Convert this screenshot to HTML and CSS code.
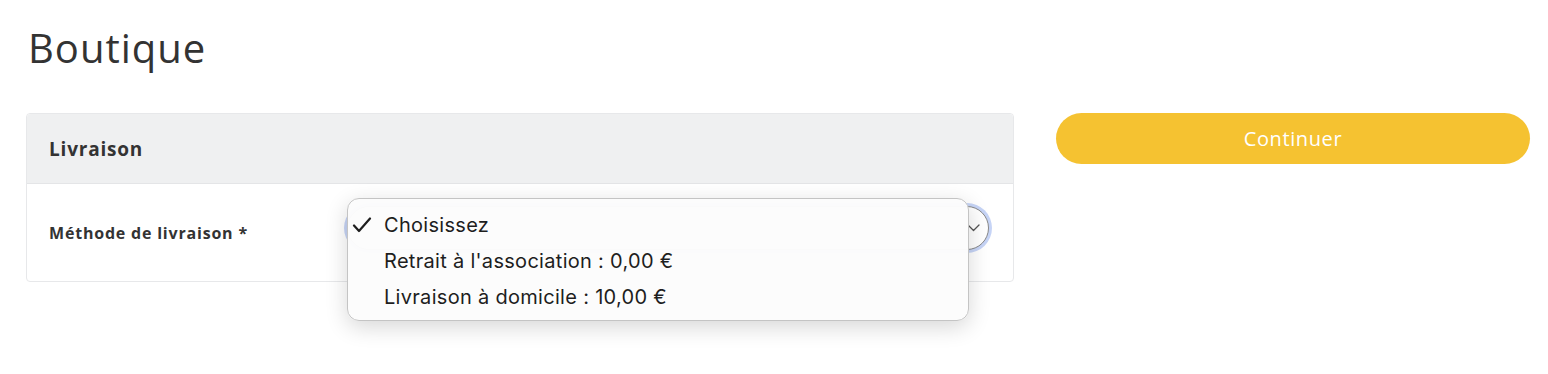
FILE: index.html
```html
<!DOCTYPE html>
<html lang="fr">
<head>
  <meta charset="UTF-8">
  <title>Boutique</title>
  <link rel="stylesheet" href="styles.css">
</head>
<body>
  <h1 class="page-title">Boutique</h1>

  <div class="checkout">
    <!-- Delivery card -->
    <div class="card">
      <div class="card-header">Livraison</div>
      <div class="card-body">
        <label class="field-label">Méthode de livraison *</label>
        <div class="select-wrap">
          <div class="select">
            <span class="select-arrow">
              <svg width="13" height="8" viewBox="0 0 13 8"><path d="M1 1 L6.5 6.5 L12 1" fill="none" stroke="#555" stroke-width="1.3" stroke-linecap="round" stroke-linejoin="round"/></svg>
            </span>
          </div>
          <!-- open native menu -->
          <ul class="menu">
            <li class="menu-item checked">
              <svg class="check" width="20" height="16" viewBox="0 0 20 16"><path d="M2 8.5 L7 14 L18 1.5" fill="none" stroke="#1e1e1e" stroke-width="2.2" stroke-linecap="round" stroke-linejoin="round"/></svg>
              Choisissez
            </li>
            <li class="menu-item">Retrait à l'association : 0,00 €</li>
            <li class="menu-item">Livraison à domicile : 10,00 €</li>
          </ul>
        </div>
      </div>
    </div>

    <!-- Actions -->
    <div class="actions">
      <button class="btn-continue">Continuer</button>
    </div>
  </div>
</body>
</html>
```

FILE: styles.css
```css
/* Reset */
* {
  margin: 0;
  padding: 0;
  box-sizing: border-box;
}

html, body {
  min-height: 374px;
}

body {
  background: #fff;
  font-family: "Open Sans", "Noto Sans", sans-serif;
  color: #333;
  padding: 21px 18px 0 26px;
}

.page-title {
  font-size: 40px;
  font-weight: 400;
  color: #333;
  line-height: 54px;
  padding-left: 2px;
  letter-spacing: 1px;
}

/* Main row */
.checkout {
  display: flex;
  gap: 42px;
  margin-top: 38px;
  align-items: flex-start;
}

/* Card */
.card {
  width: 988px;
  border: 1px solid #e7e8ea;
  border-radius: 4px;
  background: #fff;
}

.card-header {
  height: 70px;
  background: #eff0f1;
  border-bottom: 1px solid #e4e5e7;
  padding: 0 22px;
  display: flex;
  align-items: center;
  font-size: 19px;
  font-weight: 700;
  color: #333;
  letter-spacing: 0.8px;
  border-radius: 4px 4px 0 0;
}

.card-body {
  height: 97px;
  display: flex;
  align-items: center;
  padding: 0 22px;
}

.field-label {
  width: 298px;
  font-size: 16px;
  font-weight: 700;
  color: #333;
  letter-spacing: 0.8px;
}

.select-wrap {
  flex: 1;
  position: relative;
  margin-right: 2px;
  margin-bottom: 9px;
}

.select {
  height: 44px;
  border: 1px solid #888;
  border-radius: 22px;
  box-shadow: 0 0 0 3px #c6d4f6;
  display: flex;
  align-items: center;
  justify-content: flex-end;
  padding-right: 8px;
  background: #fff;
}

.select-arrow {
  display: flex;
}

/* Native dropdown menu */
.menu {
  position: absolute;
  left: 0;
  right: 20px;
  top: -8px;
  list-style: none;
  background: rgba(252, 252, 252, 0.98);
  border: 1px solid #c4c4c4;
  border-radius: 12px;
  box-shadow: 0 6px 22px rgba(0, 0, 0, 0.16);
  padding: 8px 0 5px;
  font-family: "Inter", "Noto Sans", sans-serif;
  font-size: 20px;
  color: #1e1e1e;
}

.menu-item {
  height: 36px;
  line-height: 36px;
  padding-left: 36px;
  position: relative;
  letter-spacing: 0.3px;
}

.menu-item .check {
  position: absolute;
  left: 4px;
  top: 10px;
}

/* Actions */
.actions {
  width: 474px;
}

.btn-continue {
  width: 100%;
  height: 51px;
  border: none;
  border-radius: 26px;
  background: #f5c231;
  color: #fff;
  font-family: "Open Sans", sans-serif;
  font-size: 20px;
  letter-spacing: 0.6px;
  cursor: pointer;
}
```
